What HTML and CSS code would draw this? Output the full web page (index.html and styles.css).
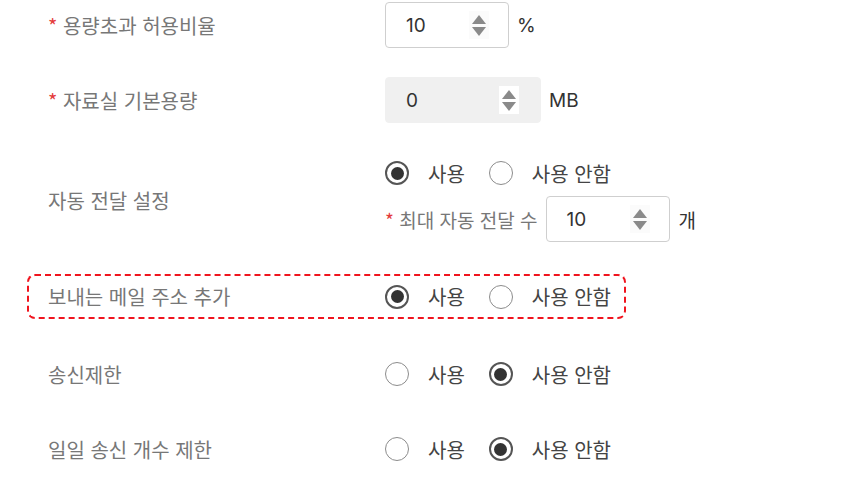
FILE: index.html
```html
<!DOCTYPE html>
<html lang="ko">
<head>
<meta charset="utf-8">
<link rel="stylesheet" href="styles.css">
</head>
<body>
<div class="form">
  <div class="row r1">
    <div class="label"><span class="req">*</span> 용량초과 허용비율</div>
    <div class="ctrl">
      <div class="num"><span class="val">10</span><span class="spin"><i class="up"></i><i class="down"></i></span></div>
      <span class="unit">%</span>
    </div>
  </div>
  <div class="row r2">
    <div class="label"><span class="req">*</span> 자료실 기본용량</div>
    <div class="ctrl">
      <div class="num disabled wide"><span class="val">0</span><span class="spin"><i class="up"></i><i class="down"></i></span></div>
      <span class="unit">MB</span>
    </div>
  </div>
  <div class="row r3">
    <div class="label">자동 전달 설정</div>
    <div class="ctrl col">
      <div class="radios">
        <span class="radio on"></span><span class="rtext">사용</span>
        <span class="radio"></span><span class="rtext">사용 안함</span>
      </div>
      <div class="sub">
        <span class="sublabel"><span class="req">*</span> 최대 자동 전달 수</span>
        <div class="num"><span class="val">10</span><span class="spin"><i class="up"></i><i class="down"></i></span></div>
        <span class="unit">개</span>
      </div>
    </div>
  </div>
  <div class="row r4 hl">
    <div class="label">보내는 메일 주소 추가</div>
    <div class="ctrl">
      <div class="radios">
        <span class="radio on"></span><span class="rtext">사용</span>
        <span class="radio"></span><span class="rtext">사용 안함</span>
      </div>
    </div>
  </div>
  <div class="row r5">
    <div class="label">송신제한</div>
    <div class="ctrl">
      <div class="radios">
        <span class="radio"></span><span class="rtext">사용</span>
        <span class="radio on"></span><span class="rtext">사용 안함</span>
      </div>
    </div>
  </div>
  <div class="row r6">
    <div class="label">일일 송신 개수 제한</div>
    <div class="ctrl">
      <div class="radios">
        <span class="radio"></span><span class="rtext">사용</span>
        <span class="radio on"></span><span class="rtext">사용 안함</span>
      </div>
    </div>
  </div>
</div>
</body>
</html>
```
FILE: styles.css
```css
html, body {
  margin: 0;
  padding: 0;
  background: #fff;
}
body {
  font-family: "Noto Sans CJK KR", "Noto Sans", sans-serif;
  font-size: 20px;
  color: #444;
  width: 864px;
  height: 482px;
  overflow: hidden;
}
.form {
  display: flex;
  flex-direction: column;
  padding: 2px 0 0 27px;
}
.row {
  display: flex;
  align-items: center;
  width: 599px;
  box-sizing: border-box;
  padding-left: 19px;
  border: 2px solid transparent;
  border-radius: 8px;
  min-height: 46px;
}
.r1 { margin-top: -2px; }
.r2 { margin-top: 25px; }
.r3 { margin-top: 31px; }
.r4 { margin-top: 30px; min-height: 45px; }
.r5 { margin-top: 33px; min-height: 44px; }
.r6 { margin-top: 31px; min-height: 44px; }
.hl {
  border: 2px dashed #f0141e;
}
.label {
  width: 337px;
  flex: none;
  color: #777;
  font-size: 20px;
  white-space: nowrap;
}
.req {
  color: #e43b3b;
}
.ctrl {
  display: flex;
  align-items: center;
}
.ctrl.col {
  flex-direction: column;
  align-items: flex-start;
  gap: 8px;
}
.num {
  width: 124px;
  height: 46px;
  box-sizing: border-box;
  border: 1px solid #cfcfcf;
  border-radius: 4px;
  display: flex;
  align-items: center;
  padding-left: 20px;
  font-family: "Inter", "Noto Sans", sans-serif;
  font-size: 19px;
  color: #333;
}
.num .val {
  flex: 1;
}
.num.wide {
  width: 156px;
}
.num.disabled {
  background: #f0f0f0;
  border-color: #f0f0f0;
}
.spin {
  width: 20px;
  height: 28px;
  margin-right: 19px;
  display: flex;
  flex-direction: column;
  align-items: center;
  justify-content: center;
  gap: 3px;
  background: #fbfbfb;
}
.disabled .spin {
  background: #fff;
  margin-right: 21px;
}
.spin i {
  display: block;
  width: 0;
  height: 0;
  border-left: 7px solid transparent;
  border-right: 7px solid transparent;
}
.spin .up {
  border-bottom: 9px solid #8a8a8a;
}
.spin .down {
  border-top: 9px solid #8a8a8a;
}
.unit {
  margin-left: 8px;
  font-family: "Inter", "Noto Sans", "Noto Sans CJK KR", sans-serif;
  font-size: 19px;
  color: #333;
}
.radios {
  display: flex;
  align-items: center;
  height: 30px;
}
.radio {
  width: 24px;
  height: 24px;
  box-sizing: border-box;
  border: 1.5px solid #8c8c8c;
  border-radius: 50%;
  display: flex;
  align-items: center;
  justify-content: center;
  flex: none;
}
.radio.on {
  border: 2px solid #555;
}
.radio.on::after {
  content: "";
  width: 13px;
  height: 13px;
  border-radius: 50%;
  background: #333;
}
.rtext {
  margin-left: 19px;
  margin-right: 24px;
  color: #444;
  font-size: 20px;
  white-space: nowrap;
}
.sub {
  display: flex;
  align-items: center;
}
.sublabel {
  color: #777;
  font-size: 19px;
  margin-right: 8px;
  white-space: nowrap;
}
.sub .unit {
  margin-left: 9px;
}
```
